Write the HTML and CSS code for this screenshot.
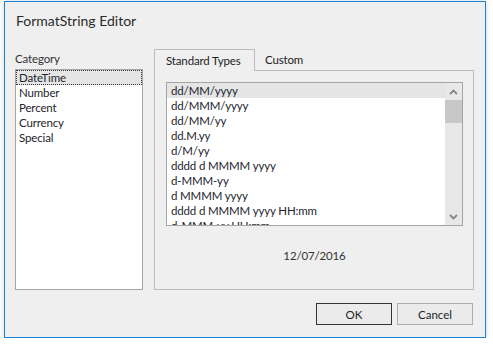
FILE: index.html
```html
<!DOCTYPE html>
<html lang="en">
<head>
    <meta charset="UTF-8">
    <title>FormatString Editor</title>
    <link rel="stylesheet" href="styles.css">
</head>
<body>
    <div class="window">
        <div class="title">FormatString Editor</div>
        <div class="main">
            <div class="category">
                <div class="label">Category</div>
                <div class="listbox">
                    <div class="item selected">DateTime</div>
                    <div class="item">Number</div>
                    <div class="item">Percent</div>
                    <div class="item">Currency</div>
                    <div class="item">Special</div>
                </div>
            </div>
            <div class="tabs">
                <div class="tab-strip">
                    <div class="tab active">Standard Types</div>
                    <div class="tab">Custom</div>
                </div>
                <div class="tab-panel">
                    <div class="format-list">
                        <div class="rows">
                            <div class="row selected">dd/MM/yyyy</div>
                            <div class="row">dd/MMM/yyyy</div>
                            <div class="row">dd/MM/yy</div>
                            <div class="row">dd.M.yy</div>
                            <div class="row">d/M/yy</div>
                            <div class="row">dddd d MMMM yyyy</div>
                            <div class="row">d-MMM-yy</div>
                            <div class="row">d MMMM yyyy</div>
                            <div class="row">dddd d MMMM yyyy HH:mm</div>
                            <div class="row">d-MMM-yy HH:mm</div>
                        </div>
                        <div class="scrollbar">
                            <div class="arrow">
                                <svg width="9" height="6" viewBox="0 0 9 6"><path d="M1 5 L4.5 1.5 L8 5" fill="none" stroke="#858585" stroke-width="1.8"/></svg>
                            </div>
                            <div class="thumb"></div>
                            <div class="track"></div>
                            <div class="arrow">
                                <svg width="9" height="6" viewBox="0 0 9 6"><path d="M1 1 L4.5 4.5 L8 1" fill="none" stroke="#858585" stroke-width="1.8"/></svg>
                            </div>
                        </div>
                    </div>
                    <div class="preview">12/07/2016</div>
                </div>
            </div>
        </div>
        <div class="buttons">
            <button class="btn default">OK</button>
            <button class="btn">Cancel</button>
        </div>
    </div>
</body>
</html>
```

FILE: styles.css
```css
* {
    box-sizing: border-box;
}
body {
    margin: 0;
    background-color: #ffffff;
    font-family: Lato, "Noto Sans", sans-serif;
    font-size: 11.5px;
    letter-spacing: -0.15px;
    color: #1e1e1e;
}
.window {
    margin: 1px 0 0 4px;
    width: 482px;
    height: 337px;
    border: 1px solid #1883d7;
    background-color: #efefef;
    box-shadow: 0 0 5px rgba(0, 0, 0, 0.18);
    padding: 0 11px 0 10px;
    display: flex;
    flex-direction: column;
}
.title {
    height: 47px;
    line-height: 38px;
    padding-left: 1px;
    font-size: 14px;
    letter-spacing: 0;
    color: #2b2b2b;
}
.main {
    height: 241px;
    display: flex;
    gap: 11px;
}
.category {
    width: 128px;
    display: flex;
    flex-direction: column;
}
.label {
    height: 20px;
    padding-top: 2px;
    line-height: 16px;
    color: #333;
}
.listbox {
    flex: 1;
    background-color: #fff;
    border: 1px solid #a5a5a5;
}
.item {
    height: 15px;
    line-height: 15px;
    padding-left: 3px;
    color: #24242e;
}
.item.selected {
    background-color: #e5e5e5;
    outline: 1px dotted #333;
    outline-offset: -1px;
}
.tabs {
    flex: 1;
    display: flex;
    flex-direction: column;
}
.tab-strip {
    display: flex;
    height: 21px;
}
.tab {
    height: 22px;
    line-height: 21px;
    padding: 0 10px;
    white-space: nowrap;
    color: #222;
}
.tab.active {
    width: 101px;
    padding-left: 11px;
    border: 1px solid #bcbcbc;
    border-bottom: none;
    background-color: #efefef;
    position: relative;
    z-index: 1;
}
.tab-panel {
    flex: 1;
    border: 1px solid #bcbcbc;
    padding: 11px 10px 0 11px;
}
.format-list {
    height: 144px;
    background-color: #fff;
    border: 1px solid #a5a5a5;
    display: flex;
    overflow: hidden;
}
.rows {
    flex: 1;
}
.row {
    height: 15px;
    line-height: 15px;
    padding-left: 4px;
    white-space: nowrap;
    color: #24242e;
}
.row.selected {
    background-color: #e5e5e5;
}
.scrollbar {
    width: 17px;
    background-color: #e8e8e8;
    display: flex;
    flex-direction: column;
}
.arrow {
    height: 17px;
    display: flex;
    align-items: center;
    justify-content: center;
}
.thumb {
    height: 23px;
    background-color: #c8c8c8;
}
.track {
    flex: 1;
}
.preview {
    margin-top: 22px;
    line-height: 16px;
    text-align: center;
    color: #333;
}
.buttons {
    margin-top: 13px;
    display: flex;
    justify-content: flex-end;
    gap: 5px;
    padding-right: 1px;
}
.btn {
    width: 76px;
    height: 22px;
    font-family: Lato, "Noto Sans", sans-serif;
    font-size: 11.5px;
    color: #1e1e1e;
    background-color: #ebebeb;
    border: 1px solid #adadad;
    padding: 0;
}
.btn.default {
    border-color: #333;
}
```
